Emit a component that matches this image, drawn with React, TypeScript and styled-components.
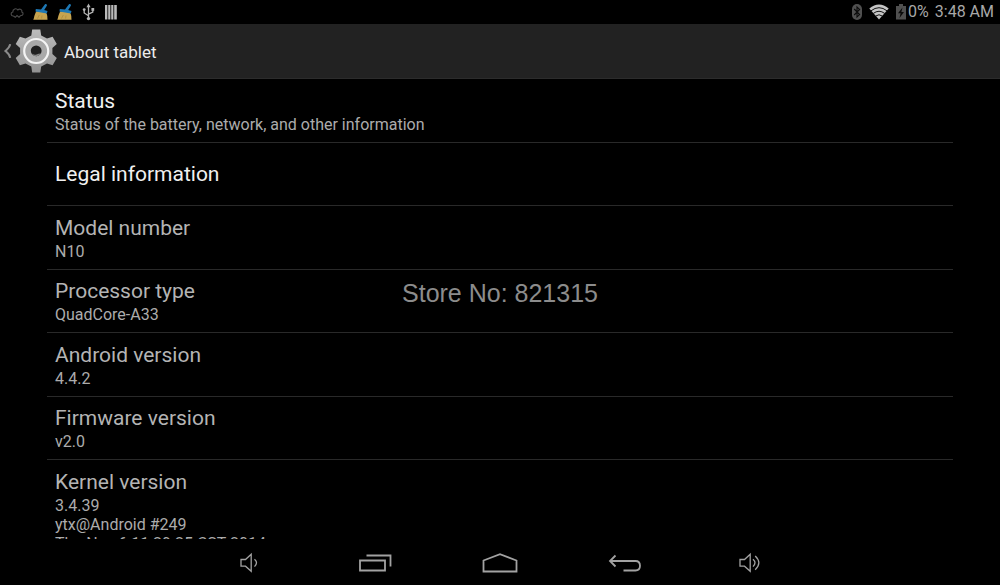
import React from "react";
import styled, { createGlobalStyle } from "styled-components";

const GlobalStyle = createGlobalStyle`
  *, *::before, *::after { box-sizing: border-box; }
  body { margin: 0; background: #000; font-family: Roboto, "Liberation Sans", sans-serif; }
`;

const Screen = styled.div`
  position: relative;
  display: flex;
  flex-direction: column;
  height: 100vh;
  overflow: hidden;
  background: #000;
`;

const StatusBar = styled.header`
  display: flex;
  flex: none;
  align-items: center;
  justify-content: space-between;
  height: 24px;
  padding: 0 6px 0 8px;
  color: #a8a8a8;
  font-size: 16px;
  line-height: 24px;
`;

const Notifications = styled.div`
  display: flex;
  align-items: center;
  gap: 6px;
`;

const Indicators = styled.div`
  display: flex;
  align-items: center;
`;

const StatusIcons = styled.div`
  display: flex;
  align-items: center;
  gap: 5px;
  margin-right: 1px;
`;

const Clock = styled.time`
  margin-left: 6px;
`;

const ActionBar = styled.div`
  display: flex;
  flex: none;
  align-items: center;
  height: 55px;
  border-bottom: 1px solid #2c2c2c;
  background: #222;
`;

const UpButton = styled.button`
  display: flex;
  align-items: center;
  gap: 3px;
  padding: 0 0 0 3px;
  border: 0;
  background: none;
`;

const ScreenTitle = styled.h1`
  margin: 0;
  padding: 2px 0 0 6px;
  color: #ececec;
  font-size: 17px;
  font-weight: 400;
  line-height: 24px;
`;

const Content = styled.main`
  flex: 1;
  min-height: 0;
  overflow: hidden;
  padding: 0 47px;
`;

const PreferenceList = styled.div`
  display: grid;
  grid-auto-rows: 1fr;
  min-height: 381px;
`;

const Preference = styled.section<{ $enabled?: boolean }>`
  display: flex;
  flex-direction: column;
  justify-content: center;
  padding: 0 8px;
  border-bottom: 1px solid #292929;
  color: ${(p) => (p.$enabled ? "#f0f0f0" : "#b4b4b4")};
`;

const LastPreference = styled(Preference)`
  padding-top: 8px;
  border-bottom: 0;
`;

const PreferenceTitle = styled.h2`
  margin: 0;
  font-size: 21px;
  font-weight: 400;
  line-height: 28px;
`;

const Summary = styled.p`
  margin: 0;
  color: #acacac;
  font-size: 16px;
  line-height: 19px;
  white-space: pre-line;
`;

const NavigationBar = styled.nav`
  display: flex;
  flex: none;
  align-items: center;
  justify-content: center;
  height: 46px;
`;

const NavButton = styled.button`
  display: flex;
  align-items: center;
  justify-content: center;
  width: 125px;
  height: 46px;
  padding: 2px 0 0;
  border: 0;
  background: none;
  color: #a2a2a2;
`;

const Watermark = styled.div`
  position: absolute;
  top: 50%;
  left: 50%;
  transform: translate(-50%, -50%);
  color: #8c8c8c;
  font-family: "Liberation Sans", Arial, sans-serif;
  font-size: 25px;
  line-height: 30px;
  white-space: nowrap;
  pointer-events: none;
`;

const CloudIcon = () => (
  <svg width="18" height="18" viewBox="0 0 18 18" fill="none" stroke="#4b4b4b" strokeWidth="1.1">
    <path d="M5.5 13C2.6 13.2 2.3 9.6 4.8 9C4.6 5.6 8.5 4.8 9.8 7C12 5 14.6 7.2 13.8 9C16 9.8 15.2 13 12.8 12.4M5.5 13L7.3 14.3L9 12.6L11 14.2L12.8 12.4" />
  </svg>
);

const BroomIcon = () => (
  <svg width="18" height="18" viewBox="0 0 18 18">
    <path d="M1.2 16.8C2.3 15.3 2 11.8 4.5 8.2L14 9.5C15.8 12 15.2 14.7 15.5 16.8Z" fill="#c7a450" />
    <path d="M5.5 15.5L7.3 12M9.6 15.5L10 12.5" stroke="#a98738" strokeWidth="0.7" />
    <path d="M3.8 6L9 6.5L12.8 1.4C13.8 .2 15.6 1.5 14.8 2.8L12.2 7.1L15.5 8.1L14.8 10.5L3.5 8.4Z" fill="#1d78b5" />
  </svg>
);

const UsbIcon = () => (
  <svg width="18" height="18" viewBox="0 0 18 18" fill="none" stroke="#b4b4b4" strokeWidth="1.3">
    <path d="M8.5 3.5V15M8.5 12.8L4.2 10V6.5M8.5 11.2L12.8 9V6" />
    <path d="M8.5 .6L6.4 4.2H10.6Z" fill="#b4b4b4" stroke="none" />
    <circle cx="8.5" cy="15.6" r="1.7" fill="#b4b4b4" stroke="none" />
    <circle cx="4.2" cy="6.6" r="1.4" fill="#b4b4b4" stroke="none" />
    <path d="M11.4 5H14.2V7.8H11.4Z" fill="#b4b4b4" stroke="none" />
  </svg>
);

const BarsIcon = () => (
  <svg width="16" height="18" viewBox="0 0 16 18" fill="#b9b9b9">
    <path d="M1 2H3.4V16.6H1ZM4.2 2H6.4V16.6H4.2ZM7.2 2H9.4V16.6H7.2ZM10.2 2H12.8V16.6H10.2Z" />
  </svg>
);

const BluetoothIcon = () => (
  <svg width="12" height="18" viewBox="0 0 12 18">
    <rect x="1" y="1" width="10" height="16" rx="5" fill="#505050" />
    <path d="M3.2 6L8.6 11.6L6 14V4L8.6 6.4L3.2 12" fill="none" stroke="#0a0a0a" strokeWidth="1.1" />
  </svg>
);

const WifiIcon = () => (
  <svg width="22" height="18" viewBox="0 0 22 18">
    <path d="M1.3 5.4Q11-2.2 20.7 5.4L11 16.6Z" fill="#c4c4c4" />
    <path d="M3 7.8Q11 1.6 19 7.8M5.2 10.5Q11 6 16.8 10.5M7.6 13.1Q11 10.4 14.4 13.1" fill="none" stroke="#111" strokeWidth="1" />
  </svg>
);

const BatteryIcon = () => (
  <svg width="12" height="18" viewBox="0 0 12 18">
    <path d="M4 1H8V3H11V16.5H1V3H4Z" fill="#505050" />
    <path d="M7.5 4.6L3 10.3H5.6L4.5 15L9 8.9H6.4Z" fill="#0a0a0a" />
  </svg>
);

const BackCaret = () => (
  <svg width="9" height="16" viewBox="0 0 9 16" fill="none" stroke="#8b8b8b" strokeWidth="2">
    <path d="M7.2 1.2C6.7 4.5 5 5.8 2.4 8C5 10.2 6.7 11.5 7.2 14.8" />
  </svg>
);

const GearIcon = () => (
  <svg width="43" height="46" viewBox="0 0 43 46">
    <defs>
      <linearGradient id="gear" x1="0" y1="0" x2="0" y2="1">
        <stop offset="0" stopColor="#bcbcbc" />
        <stop offset="1" stopColor="#929292" />
      </linearGradient>
    </defs>
    <path
      d="M17.2 1.5H25.3L26.2 7.4L32 10.6L37.6 8.8L41.8 16L37.4 20V26L41.8 30L37.6 37.2L32 35.4L26.2 38.6L25.3 44.5H17.2L16.3 38.6L10.5 35.4L4.9 37.2L.7 30L5.1 26V20L.7 16L4.9 8.8L10.5 10.6L16.3 7.4Z"
      fill="url(#gear)"
    />
    <circle cx="21.2" cy="23" r="12" fill="#a9a9a9" stroke="#f4f4f4" strokeWidth="2.2" />
    <circle cx="21.2" cy="22.8" r="5.4" fill="#202020" />
    <path d="M16.6 25.6A5.4 5.4 0 0 0 25.8 25.6Q23.5 25.6 21.5 26.4Q19 27.4 16.6 25.6" fill="#858585" />
  </svg>
);

const VolumeDownIcon = () => (
  <svg width="22" height="22" viewBox="0 0 22 22" fill="none" stroke="currentColor" strokeWidth="1.3">
    <path d="M2 7.5H6.5L12.2 2.2V19.2L6.5 14.2H2Z" />
    <path d="M15.5 7.2Q19.5 10.8 15.5 14.6" />
  </svg>
);

const VolumeUpIcon = () => (
  <svg width="24" height="22" viewBox="0 0 24 22" fill="none" stroke="currentColor" strokeWidth="1.3">
    <path d="M2 7.5H6.5L12.2 2.2V19.2L6.5 14.2H2Z" />
    <path d="M15 7.2Q19 10.8 15 14.6M17.2 4Q24.5 10.8 17.2 17.8" />
  </svg>
);

const RecentsIcon = () => (
  <svg width="34" height="20" viewBox="0 0 34 20" fill="none" stroke="currentColor" strokeWidth="1.8">
    <path d="M2 7.5H27V17.5H2ZM8.5 2.5H32.5V13.5" />
  </svg>
);

const HomeIcon = () => (
  <svg width="36" height="22" viewBox="0 0 36 22" fill="none" stroke="currentColor" strokeWidth="1.8">
    <path d="M1.5 8.5L18 2.2L34.5 8.5V19.5H1.5Z" />
  </svg>
);

const BackIcon = () => (
  <svg width="34" height="20" viewBox="0 0 34 20" fill="none" stroke="currentColor" strokeWidth="1.8">
    <path d="M2 8H27.5Q32 8 32 12.8Q32 17.5 27.5 17.5H15.5M7.5 2.5L2 8L7.5 13.5" />
  </svg>
);

const preferences = [
  { title: "Status", summary: "Status of the battery, network, and other information", enabled: true },
  { title: "Legal information", enabled: true },
  { title: "Model number", summary: "N10" },
  { title: "Processor type", summary: "QuadCore-A33" },
  { title: "Android version", summary: "4.4.2" },
  { title: "Firmware version", summary: "v2.0" },
];

const navigation = [
  { label: "Volume down", Icon: VolumeDownIcon },
  { label: "Recent apps", Icon: RecentsIcon },
  { label: "Home", Icon: HomeIcon },
  { label: "Back", Icon: BackIcon },
  { label: "Volume up", Icon: VolumeUpIcon },
];

export default function App() {
  return (
    <>
      <GlobalStyle />
      <Screen>
        <StatusBar>
          <Notifications>
            <CloudIcon />
            <BroomIcon />
            <BroomIcon />
            <UsbIcon />
            <BarsIcon />
          </Notifications>
          <Indicators>
            <StatusIcons>
              <BluetoothIcon />
              <WifiIcon />
              <BatteryIcon />
            </StatusIcons>
            <span>0%</span>
            <Clock>3:48 AM</Clock>
          </Indicators>
        </StatusBar>
        <ActionBar>
          <UpButton aria-label="Navigate up">
            <BackCaret />
            <GearIcon />
          </UpButton>
          <ScreenTitle>About tablet</ScreenTitle>
        </ActionBar>
        <Content>
          <PreferenceList>
            {preferences.map(({ title, summary, enabled }) => (
              <Preference key={title} $enabled={enabled}>
                <PreferenceTitle>{title}</PreferenceTitle>
                {summary && <Summary>{summary}</Summary>}
              </Preference>
            ))}
          </PreferenceList>
          <LastPreference>
            <PreferenceTitle>Kernel version</PreferenceTitle>
            <Summary>{"3.4.39\nytx@Android #249\nThu Nov 6 11:29:25 CST 2014"}</Summary>
          </LastPreference>
        </Content>
        <NavigationBar aria-label="System navigation">
          {navigation.map(({ label, Icon }) => (
            <NavButton key={label} aria-label={label}>
              <Icon />
            </NavButton>
          ))}
        </NavigationBar>
        <Watermark>Store No: 821315</Watermark>
      </Screen>
    </>
  );
}
